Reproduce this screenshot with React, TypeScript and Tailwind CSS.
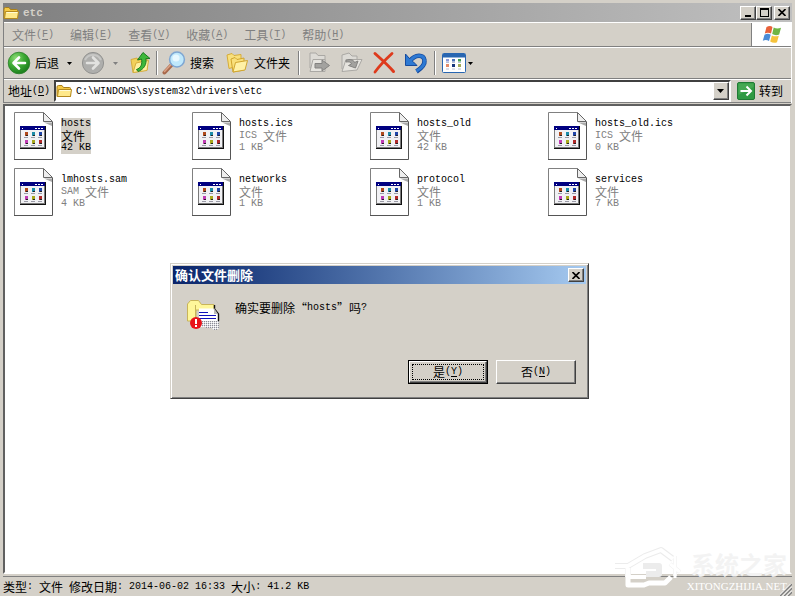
// src/App.tsx
import { Fragment, useState } from 'react';
import type { ReactNode } from 'react';

const menus = [
  { label: '文件', key: 'F' },
  { label: '编辑', key: 'E' },
  { label: '查看', key: 'V' },
  { label: '收藏', key: 'A' },
  { label: '工具', key: 'T' },
  { label: '帮助', key: 'H' },
];

const files = [
  { name: 'hosts', type: '文件', size: '42 KB' },
  { name: 'hosts.ics', type: 'ICS 文件', size: '1 KB' },
  { name: 'hosts_old', type: '文件', size: '42 KB' },
  { name: 'hosts_old.ics', type: 'ICS 文件', size: '0 KB' },
  { name: 'lmhosts.sam', type: 'SAM 文件', size: '4 KB' },
  { name: 'networks', type: '文件', size: '1 KB' },
  { name: 'protocol', type: '文件', size: '1 KB' },
  { name: 'services', type: '文件', size: '7 KB' },
];

const raised =
  'border border-t-white border-l-white border-r-[#404040] border-b-[#404040] bg-[#d4d0c8] shadow-[inset_-1px_-1px_0_#808080]';

const Latin = ({ children }: { children: ReactNode }) => (
  <span className="font-['Liberation_Mono',monospace] text-[10px] leading-3 whitespace-pre">{children}</span>
);

// Latin runs are set in a half-width mono face, the rest in the CJK face
const Mixed = ({ text }: { text: string }) => (
  <span className="flex h-3 items-center">
    {text.split(/([\x20-\x7e]+)/).map((part, i) => (
      <Fragment key={i}>{i % 2 ? <Latin>{part}</Latin> : part}</Fragment>
    ))}
  </span>
);

const Mnemonic = ({ label, letter }: { label: string; letter: string }) => (
  <span className="flex h-3 items-center">
    {label}
    <Latin>
      (<span className="underline underline-offset-2">{letter}</span>)
    </Latin>
  </span>
);

const FolderIcon = () => (
  <svg width="16" height="16" viewBox="0 0 16 16" aria-hidden="true" className="shrink-0">
    <path d="M1 4Q1 2.5 2.5 2.5H6L7.5 4.5H13.5Q14.5 4.5 14.5 5.5V13.5H1Z" fill="#f5c945" stroke="#a97f19" />
    <path d="M1.5 13.5L2.5 6.5H15.5L14.5 13.5Z" fill="#ffe98a" stroke="#b58a1f" />
    <path d="M3.5 7.5H14.5" stroke="#fffbd6" />
  </svg>
);

const BackIcon = () => (
  <svg width="24" height="24" viewBox="0 0 24 24" aria-hidden="true">
    <defs>
      <radialGradient id="back" cx="35%" cy="28%" r="75%">
        <stop offset="0" stopColor="#8fdc78" />
        <stop offset="0.5" stopColor="#3fab35" />
        <stop offset="1" stopColor="#1b7d1c" />
      </radialGradient>
    </defs>
    <circle cx="12" cy="12" r="10.8" fill="url(#back)" stroke="#2b7f2a" strokeWidth="0.8" />
    <path d="M18 12H7M12 6.5L6.5 12L12 17.5" fill="none" stroke="#fff" strokeWidth="2.6" strokeLinecap="round" strokeLinejoin="round" />
  </svg>
);

const ForwardIcon = () => (
  <svg width="24" height="24" viewBox="0 0 24 24" aria-hidden="true">
    <circle cx="12" cy="12" r="10.6" fill="#aeaeac" stroke="#929290" />
    <path d="M4 9A9 9 0 0 1 20 9" fill="none" stroke="#c6c6c4" strokeWidth="2" />
    <path d="M6 12H17M12 6.5L17.5 12L12 17.5" fill="none" stroke="#e2e2e0" strokeWidth="2.6" strokeLinecap="round" strokeLinejoin="round" />
  </svg>
);

const UpIcon = () => (
  <svg width="22" height="24" viewBox="0 0 22 24" aria-hidden="true">
    <path d="M1 8.5L7 7L8.5 9L17 7.5V19L3 21.5Z" fill="#f2d05a" stroke="#d4ad3e" />
    <path d="M3 21.5L6 12L18.5 9.5L17 19.5Z" fill="#fff0a0" stroke="#d4ad3e" />
    <path d="M6.5 18.5C11 17 12.5 13 11.5 8L7.5 9L13 1.5L20 7.5L15.8 7.6C17 13 14 18.5 8 20.5Z" fill="#3db83a" stroke="#1c7c20" strokeLinejoin="round" />
  </svg>
);

const SearchIcon = () => (
  <svg width="24" height="24" viewBox="0 0 24 24" aria-hidden="true">
    <path d="M9.5 14L2.5 21.5" stroke="#a8694c" strokeWidth="4" strokeLinecap="round" />
    <path d="M9 13.5L2.5 20.5" stroke="#dba184" strokeWidth="1.6" strokeLinecap="round" />
    <circle cx="15" cy="8.5" r="7.4" fill="#bfe8fb" stroke="#7ea6d2" strokeWidth="1.5" />
    <circle cx="14" cy="7" r="3.6" fill="#e8f8ff" />
  </svg>
);

const FoldersIcon = () => (
  <svg width="24" height="24" viewBox="0 0 24 24" aria-hidden="true">
    <path d="M1 4L6 2.5L8 4.5L15 3.5V14L3 17.5Z" fill="#f9e07c" stroke="#d6ac38" />
    <path d="M5 8L9 6.5L11 8.5L18 7V19L7 21Z" fill="#f9e07c" stroke="#d0a52f" />
    <path d="M7 21L9.5 11.5L21.5 9.5L19 19Z" fill="#fff1a6" stroke="#d0a52f" strokeLinejoin="round" />
  </svg>
);

const MoveIcon = () => (
  <svg width="24" height="24" viewBox="0 0 24 24" aria-hidden="true" fill="#dddbd6" stroke="#aaa8a4">
    <path d="M2 2H8L10 4.5H17V17H2Z" />
    <path d="M2 20.5L5 8.5H17V20.5Z" fill="#e6e4df" />
    <path d="M7 12.5H14V9L21.5 14.5L14 20V17H7Z" fill="#a3a29f" stroke="#838280" />
  </svg>
);

const CopyIcon = () => (
  <svg width="24" height="24" viewBox="0 0 24 24" aria-hidden="true" fill="#dddbd6" stroke="#aaa8a4">
    <path d="M2 4L9 2L12 5H17V18H2Z" />
    <path d="M2 20.5L6 8.5H22L17 19Z" fill="#e6e4df" />
    <path d="M6 9.5C10 7.5 14 9 14.5 11.5L18 10L15.5 17L8.5 14.5L11.5 13C11 11 9 10.5 6 11Z" fill="#a3a29f" stroke="#838280" />
  </svg>
);

const DeleteIcon = () => (
  <svg width="24" height="24" viewBox="0 0 24 24" aria-hidden="true" fill="none" stroke="#de3a1c" strokeLinecap="round">
    <path d="M3 2.5C9 8 16 14 21.5 20.5" strokeWidth="3" />
    <path d="M20 2.5C13 9 8 14 3 21" strokeWidth="2.8" />
  </svg>
);

const UndoIcon = () => (
  <svg width="24" height="24" viewBox="0 0 24 24" aria-hidden="true">
    <path d="M6 10C11 3 20 3 20.5 9.5C21 14 17 17.5 12.5 20.5" fill="none" stroke="#164b9e" strokeWidth="4.6" />
    <path d="M1.5 3L1.5 14.5H13L9.5 11L5 7Z" fill="#2d79d3" stroke="#164b9e" strokeLinejoin="round" />
    <path d="M6 10C11 3 20 3 20.5 9.5C21 14 17 17.5 12.5 20" fill="none" stroke="#2d79d3" strokeWidth="3" />
  </svg>
);

const ViewsIcon = () => (
  <svg width="24" height="21" viewBox="0 0 24 21" aria-hidden="true">
    <rect x="0.5" y="0.5" width="23" height="19" rx="1" fill="#fff" stroke="#2866b1" />
    <path d="M1 1H23V4.5H1Z" fill="#2866b1" />
    <path d="M4 6H7V8.5H4Z" fill="#8f9bd8" />
    <path d="M10 6H13V8.5H10Z" fill="#4a70b8" />
    <path d="M16 6H19V8.5H16Z" fill="#3d9b55" />
    <path d="M4 11H7V14H4Z" fill="#e48b68" />
    <path d="M10 11H13V14H10Z" fill="#16357c" />
    <path d="M16 11H19V14H16Z" fill="#a0aa57" />
    <path d="M4 16H7M10 16H13M16 16H19M4 9.5H7M10 9.5H13M16 9.5H19" stroke="#b7c0d4" />
  </svg>
);

const FlagIcon = () => (
  <svg width="20" height="19" viewBox="0 0 20 19" aria-hidden="true">
    <path d="M4.5 2Q8 0 10.5 2L9 8.5Q6 6.8 2.8 8.5Z" fill="#e8613a" />
    <path d="M11.7 2.5Q15 4.5 19 2.8L17.2 9.5Q13.5 11 10.2 9Z" fill="#6fb544" />
    <path d="M2.5 9.7Q6 8 8.7 9.8L7 16Q4 14 0.8 15.8Z" fill="#4b8bd6" />
    <path d="M9.9 10.4Q13 12 16.8 10.8L15 17.2Q11.5 18.5 8.2 16.5Z" fill="#f6c33c" />
  </svg>
);

const GoIcon = () => (
  <svg width="18" height="18" viewBox="0 0 18 18" aria-hidden="true">
    <rect x="0.5" y="0.5" width="17" height="17" rx="1.5" fill="#2f9a43" stroke="#207a34" />
    <path d="M1.5 1.5H16.5V5L1.5 13Z" fill="#45a752" />
    <path d="M3.5 9H14M9.5 4.5L14 9L9.5 13.5" fill="none" stroke="#fff" strokeWidth="2" />
  </svg>
);

const FileIcon = () => (
  <svg width="39" height="48" viewBox="0 0 39 48" aria-hidden="true" className="shrink-0">
    <path d="M0.5 0.5H29.5L38.5 9.5V47.5H0.5Z" fill="#fff" />
    <path d="M0.5 47V0.5H29.5" fill="none" stroke="#808080" />
    <path d="M0 47.5H38.5V10" fill="none" stroke="#555" />
    <path d="M29.5 0.5V9.5H38.5Z" fill="#eee" stroke="#666" />
    <path d="M30 10.5H38V14Z" fill="#aaa" />
    <g shapeRendering="crispEdges">
      <rect x="6" y="14" width="26" height="23" fill="#111" />
      <rect x="6" y="14" width="25" height="22" fill="#7a7a7a" />
      <rect x="7" y="18" width="23" height="17" fill="#f1f1f4" />
      <rect x="6" y="14" width="25" height="4" fill="#000080" />
      <path d="M8 16H9M21 16H23M24 16H26M27 16H29" stroke="#fff" />
      <path d="M10 25H14M17 25H21M24 25H28M10 33H14M17 33H21M24 33H28" stroke="#9a9aa6" />
      <rect x="11" y="20" width="3" height="4" fill="#b04a1c" />
      <rect x="18" y="20" width="3" height="4" fill="#1c8ca8" />
      <rect x="25" y="20" width="3" height="4" fill="#1f45a8" />
      <rect x="11" y="28" width="3" height="4" fill="#c03cb4" />
      <rect x="18" y="28" width="3" height="4" fill="#a8a81c" />
      <rect x="25" y="28" width="3" height="4" fill="#b02828" />
      <path d="M12 23.5H14M19 23.5H21M26 23.5H28M12 31.5H14M19 31.5H21M26 31.5H28" stroke="#222" />
    </g>
  </svg>
);

const DeleteFileIcon = () => (
  <svg width="34" height="32" viewBox="0 0 34 32" aria-hidden="true" className="shrink-0">
    <defs>
      <pattern id="shred" width="2" height="2" patternUnits="userSpaceOnUse">
        <rect width="2" height="2" fill="#e0e0e4" />
        <rect width="1" height="1" fill="#fff" />
        <rect x="1" y="1" width="1" height="1" fill="#8c8c96" />
      </pattern>
    </defs>
    <path d="M0.5 21V4L3.5 0.5H11.5L14.5 4.5H27V10H9V21Z" fill="#fff79a" stroke="#c8b45a" />
    <path d="M8.5 5V18" stroke="#c8b45a" />
    <path d="M12 8.5H27L32 14V21H12Z" fill="#fff" />
    <path d="M27.5 5V9L31.5 14V21" fill="none" stroke="#111" strokeWidth="1.4" />
    <path d="M27 8L31 14H27Z" fill="#bbb" />
    <path d="M12 12.5H21M12 15.5H29M12 18.5H29" stroke="#1111bb" shapeRendering="crispEdges" />
    <path d="M14 21H32V29L27 30L24 28L14 27Z" fill="url(#shred)" shapeRendering="crispEdges" />
    <circle cx="9" cy="23" r="6" fill="#e8121a" />
    <path d="M8 19H10V24H8ZM8 25H10V27H8Z" fill="#fff" shapeRendering="crispEdges" />
  </svg>
);

const CloseGlyph = () => (
  <svg width="8" height="7" viewBox="0 0 8 7" aria-hidden="true">
    <path d="M0.5 0L7.5 7M7.5 0L0.5 7" stroke="#000" strokeWidth="1.6" />
  </svg>
);

const Caret = ({ color = '#000' }: { color?: string }) => (
  <svg width="5" height="3" viewBox="0 0 5 3" aria-hidden="true">
    <path d="M0 0H5L2.5 3Z" fill={color} />
  </svg>
);

const Divider = () => <div className="h-6 w-0.5 border-l border-l-[#808080] bg-white" />;

const Watermark = () => (
  <div className="pointer-events-none absolute right-2 bottom-1 flex items-end gap-1">
    <svg width="70" height="46" viewBox="0 0 70 46" aria-hidden="true" fill="none">
      <g stroke="#ececec" strokeWidth="6" strokeLinejoin="round">
        <path d="M2 20H15L32 10L48 4L60 13" />
        <path d="M15 20V31M30 20H46V28H33" />
        <path d="M62 10V30M57 18L67 26" strokeWidth="4" />
      </g>
      <g stroke="#fff" strokeWidth="5" strokeLinejoin="round">
        <path d="M2 20H15L32 10L48 4L60 13" strokeWidth="4" />
        <path d="M15 22V39H31L36 37H52L58 31" />
        <path d="M15 31H33" strokeWidth="4" />
        <path d="M62 10V32M57 18L67 26" strokeWidth="3" />
      </g>
    </svg>
    <div className="flex flex-col items-end">
      <span className="text-2xl leading-8 font-bold text-[#f3f3f3]">系统之家</span>
      <span className="font-['Liberation_Serif',serif] text-[11px] leading-3 text-white">XITONGZHIJIA.NET</span>
    </div>
  </div>
);

const ConfirmDialog = ({ onClose }: { onClose: () => void }) => (
  <div
    role="dialog"
    aria-labelledby="dialog-title"
    className="absolute top-[263px] left-[170px] w-[419px] border border-t-[#d4d0c8] border-l-[#d4d0c8] border-r-[#404040] border-b-[#404040] bg-[#d4d0c8] p-0.5 shadow-[inset_1px_1px_0_#fff,inset_-1px_-1px_0_#808080]"
  >
    <div className="flex h-[18px] items-center justify-between bg-linear-to-r from-[#0a246a] to-[#a6caf0] px-0.5">
      <h2 id="dialog-title" className="text-[13px] leading-3 font-bold text-white">确认文件删除</h2>
      <button aria-label="关闭" onClick={onClose} className={`flex h-3.5 w-4 items-center justify-center ${raised}`}>
        <CloseGlyph />
      </button>
    </div>
    <div className="flex gap-3.5 px-3.5 pt-4">
      <DeleteFileIcon />
      <p className="pt-0.5">
        <Mixed text="确实要删除“hosts”吗?" />
      </p>
    </div>
    <div className="flex justify-end gap-2 px-2.5 pt-7 pb-3">
      <button onClick={onClose} className="h-6 w-20 border border-black">
        <span className={`flex h-full items-center justify-center p-0.5 ${raised}`}>
          <span className="flex h-full w-full items-center justify-center border border-dotted border-black">
            <Mnemonic label="是" letter="Y" />
          </span>
        </span>
      </button>
      <button onClick={onClose} className={`flex h-6 w-20 items-center justify-center ${raised}`}>
        <Mnemonic label="否" letter="N" />
      </button>
    </div>
  </div>
);

const App = () => {
  const [selected, setSelected] = useState('hosts');
  const [address, setAddress] = useState('C:\\WINDOWS\\system32\\drivers\\etc');
  const [open, setOpen] = useState(true);

  return (
    <div
      lang="zh-CN"
      className="relative flex min-h-screen flex-col bg-[#d4d0c8] px-[3px] pt-[3px] font-['Noto_Sans_CJK_SC',sans-serif] text-xs leading-3 text-black"
    >
      <header className="flex h-[19px] items-center justify-between bg-linear-to-r from-[#808080] to-[#c0c0c0] pr-0.5">
        <div className="flex items-center gap-1">
          <FolderIcon />
          <h1 className="font-['Liberation_Mono',monospace] text-[11px] leading-3 font-bold text-[#d4d0c8]">etc</h1>
        </div>
        <div className="flex">
          <button aria-label="最小化" className={`flex h-3.5 w-4 items-end justify-center pb-0.5 ${raised}`}>
            <span className="h-0.5 w-1.5 bg-black" />
          </button>
          <button aria-label="最大化" className={`flex h-3.5 w-4 items-center justify-center ${raised}`}>
            <span className="h-[9px] w-[9px] border border-t-2 border-black" />
          </button>
          <button aria-label="关闭" className={`ml-0.5 flex h-3.5 w-4 items-center justify-center ${raised}`}>
            <CloseGlyph />
          </button>
        </div>
      </header>

      <div className="border-r border-l border-r-white border-l-[#808080]">
        <nav className="flex h-[25px] border-t border-b border-t-white border-b-[#808080] text-[#808080]">
          {menus.map((m) => (
            <button key={m.key} className="px-2">
              <Mnemonic label={m.label} letter={m.key} />
            </button>
          ))}
          <div className="ml-auto flex w-10 items-center justify-center border-l border-l-[#808080] bg-white">
            <FlagIcon />
          </div>
        </nav>

        <div className="flex h-8 items-center border-t border-b border-t-white border-b-[#808080] pl-[3px]">
          <button className="flex items-center gap-1">
            <BackIcon />
            后退
          </button>
          <button aria-label="后退历史" className="ml-2 flex w-3.5 justify-start">
            <Caret />
          </button>
          <button aria-label="前进"><ForwardIcon /></button>
          <button aria-label="前进历史" className="mr-3 ml-2"><Caret color="#808080" /></button>
          <button aria-label="向上"><UpIcon /></button>
          <div className="px-1"><Divider /></div>
          <button className="flex items-center gap-1">
            <SearchIcon />
            搜索
          </button>
          <button className="ml-3 flex items-center gap-1">
            <FoldersIcon />
            文件夹
          </button>
          <div className="px-2"><Divider /></div>
          <div className="flex gap-2">
            <button aria-label="移至"><MoveIcon /></button>
            <button aria-label="复制到"><CopyIcon /></button>
            <button aria-label="删除" onClick={() => setOpen(true)}><DeleteIcon /></button>
            <button aria-label="撤销"><UndoIcon /></button>
          </div>
          <div className="px-1.5"><Divider /></div>
          <button aria-label="查看方式" className="flex items-center gap-0.5">
            <ViewsIcon />
            <Caret />
          </button>
        </div>

        <div className="flex h-6 items-center border-t border-b border-t-white border-b-[#808080] pl-1">
          <label htmlFor="address" className="shrink-0">
            <Mnemonic label="地址" letter="D" />
          </label>
          <div className="ml-1 flex h-[22px] flex-1 items-center border-2 border-t-[#404040] border-l-[#404040] border-r-white border-b-white bg-white">
            <div className="pr-1"><FolderIcon /></div>
            <input
              type="text"
              id="address"
              value={address}
              className="min-w-0 flex-1 pt-0.5 font-['Liberation_Mono',monospace] text-[10px] leading-3 outline-none"
              onChange={(e) => setAddress(e.target.value)}
            />
            <button aria-label="显示地址列表" className={`flex h-full w-4 items-center justify-center ${raised}`}>
              <svg width="7" height="4" viewBox="0 0 7 4" aria-hidden="true">
                <path d="M0 0H7L3.5 4Z" />
              </svg>
            </button>
          </div>
          <button className="mr-2 ml-1.5 flex items-center gap-1">
            <GoIcon />
            转到
          </button>
        </div>
      </div>

      <main className="mt-px flex-1 border-2 border-t-[#606060] border-l-[#606060] border-r-[#d4d0c8] border-b-white bg-white pt-1.5 pl-[9px]">
        <ul className="grid grid-cols-[repeat(auto-fill,178px)] gap-y-2">
          {files.map((f) => (
            <li key={f.name}>
              <button className="flex items-center gap-2 text-left" onClick={() => setSelected(f.name)}>
                <FileIcon />
                <span className={selected === f.name ? 'flex flex-col bg-[#d4d0c8]' : 'flex flex-col text-[#808080]'}>
                  <span className="text-black"><Mixed text={f.name} /></span>
                  <Mixed text={f.type} />
                  <Mixed text={f.size} />
                </span>
              </button>
            </li>
          ))}
        </ul>
      </main>

      <footer className="mt-0.5 flex h-5 items-center justify-between border-t border-t-[#808080]">
        <Mixed text="类型: 文件 修改日期: 2014-06-02 16:33 大小: 41.2 KB" />
        <svg width="12" height="12" viewBox="0 0 12 12" aria-hidden="true" className="self-end">
          <path d="M0 12L12 0M4 12L12 4M8 12L12 8" stroke="#808080" strokeWidth="1.6" />
          <path d="M-1.5 12L12 -1.5M2.5 12L12 2.5M6.5 12L12 6.5" stroke="#fff" />
        </svg>
      </footer>

      <Watermark />
      {open && <ConfirmDialog onClose={() => setOpen(false)} />}
    </div>
  );
};

export default App;
